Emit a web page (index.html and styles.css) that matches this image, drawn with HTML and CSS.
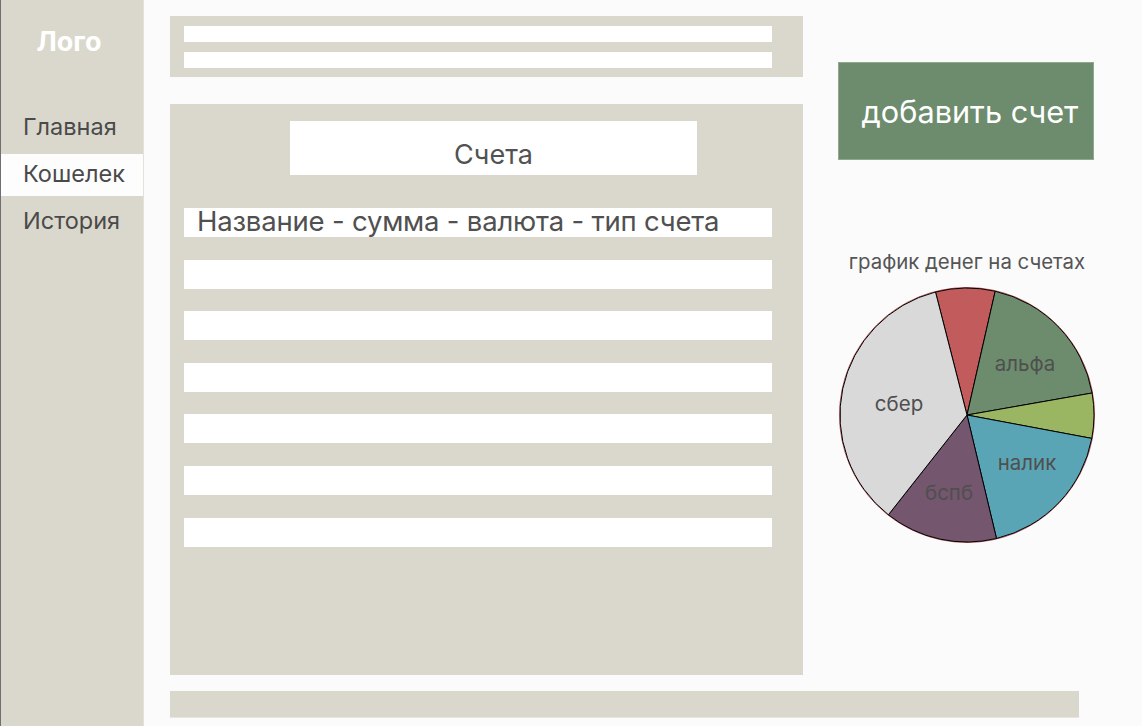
FILE: index.html
```html
<!DOCTYPE html>
<html lang="ru">
<head>
<meta charset="utf-8">
<title>Кошелек</title>
<link rel="stylesheet" href="styles.css">
</head>
<body>
<div class="app">
  <aside class="sidebar">
    <div class="logo">Лого</div>
    <nav class="nav">
      <div class="nav-item">Главная</div>
      <div class="nav-item active">Кошелек</div>
      <div class="nav-item">История</div>
    </nav>
  </aside>
  <main class="content">
    <div class="grid">
      <div class="left">
        <div class="topbar">
          <div class="bar"></div>
          <div class="bar"></div>
        </div>
        <section class="panel">
          <div class="panel-title">Счета</div>
          <div class="rows">
            <div class="row head">Название - сумма - валюта - тип счета</div>
            <div class="row"></div>
            <div class="row"></div>
            <div class="row"></div>
            <div class="row"></div>
            <div class="row"></div>
            <div class="row"></div>
          </div>
        </section>
      </div>
      <div class="right">
        <button class="add-btn">добавить счет</button>
        <div class="chart-title">график денег на счетах</div>
        <div class="pie">
          <svg width="262" height="262" viewBox="-131 -131 262 262">
            <circle cx="0" cy="0" r="127.5" fill="none" stroke="#c25b5b" stroke-width="1"/>
            <g stroke="#000" stroke-width="1" stroke-linejoin="round">
              <path d="M0 0 L-31.5 -123.0 A127 127 0 0 1 28.2 -123.8 Z" fill="#c25b5b"/>
              <path d="M0 0 L28.2 -123.8 A127 127 0 0 1 125.1 -22.0 Z" fill="#6d8c6d"/>
              <path d="M0 0 L125.1 -22.0 A127 127 0 0 1 124.8 23.4 Z" fill="#9bb663"/>
              <path d="M0 0 L124.8 23.4 A127 127 0 0 1 29.5 123.5 Z" fill="#5aa5b5"/>
              <path d="M0 0 L29.5 123.5 A127 127 0 0 1 -78.6 99.8 Z" fill="#74566e"/>
              <path d="M0 0 L-78.6 99.8 A127 127 0 0 1 -31.5 -123.0 Z" fill="#d9d9d9"/>
            </g>
            <g class="pie-label">
              <text x="58" y="-50" text-anchor="middle" dominant-baseline="middle">альфа</text>
              <text x="-68" y="-10" text-anchor="middle" dominant-baseline="middle">сбер</text>
              <text x="60" y="49" text-anchor="middle" dominant-baseline="middle">налик</text>
              <text x="-18" y="79" text-anchor="middle" dominant-baseline="middle">бспб</text>
            </g>
          </svg>
        </div>
      </div>
    </div>
    <div class="bottombar"></div>
  </main>
</div>
</body>
</html>
```

FILE: styles.css
```css
* { box-sizing: border-box; }
html, body { margin: 0; padding: 0; }
body {
  background: #fbfbfb;
  font-family: Inter, "Noto Sans", sans-serif;
  color: #4d4d4d;
  width: 1142px;
  height: 726px;
  overflow: hidden;
}
.app {
  display: flex;
  height: 726px;
}
.sidebar {
  width: 144px;
  flex: none;
  background: #dad8cc;
  border-left: 1px solid #6f6f6f;
  border-right: 1px solid #e4e2d8;
  display: flex;
  flex-direction: column;
}
.logo {
  color: #fff;
  font-weight: 700;
  font-size: 27px;
  line-height: 32px;
  text-align: center;
  height: 107px;
  padding-top: 26px;
  padding-right: 6px;
}
.nav {
  display: flex;
  flex-direction: column;
  gap: 5px;
}
.nav-item {
  height: 42px;
  display: flex;
  align-items: center;
  padding-left: 22px;
  padding-bottom: 3px;
  font-size: 23.5px;
  color: #4a4a4a;
}
.nav-item.active { background: #fdfdfd; }
.content {
  padding-left: 26px;
  padding-top: 16px;
  display: flex;
  flex-direction: column;
}
.grid {
  display: flex;
  gap: 35px;
}
.left {
  width: 633px;
  display: flex;
  flex-direction: column;
  gap: 27px;
}
.topbar {
  height: 61px;
  background: #dad8cc;
  padding: 10px 31px 0 14px;
  display: flex;
  flex-direction: column;
  gap: 10px;
}
.bar {
  height: 16px;
  background: #fff;
}
.panel {
  height: 571px;
  background: #dad8cc;
  padding: 17px 31px 0 14px;
}
.panel-title {
  width: 407px;
  height: 54px;
  margin-left: 106px;
  background: #fff;
  display: flex;
  align-items: center;
  justify-content: center;
  font-size: 27px;
  color: #525252;
  padding-top: 12px;
}
.rows {
  margin-top: 33px;
  display: flex;
  flex-direction: column;
  gap: 22.6px;
}
.row {
  height: 29px;
  background: #fff;
}
.row.head {
  font-size: 27.5px;
  line-height: 26px;
  padding-left: 13px;
  color: #505050;
  letter-spacing: -0.2px;
  white-space: nowrap;
}
.right {
  width: 256px;
  padding-top: 46px;
  display: flex;
  flex-direction: column;
}
.add-btn {
  width: 256px;
  height: 98px;
  border: 1px solid #8fa88f;
  background: #6d8c6d;
  color: #fff;
  font-family: inherit;
  font-size: 30.7px;
  padding: 0 0 0 8px;
  text-align: center;
}
.chart-title {
  margin-top: 88px;
  font-size: 20.4px;
  line-height: 28px;
  color: #555;
  text-align: center;
  width: 258px;
}
.pie {
  margin-top: 8px;
  margin-left: -2px;
  width: 262px;
  height: 262px;
}
.pie svg { display: block; }
.pie-label {
  font-family: Inter, "Noto Sans", sans-serif;
  font-size: 20.5px;
  fill: #4f4f4f;
}
.bottombar {
  margin-top: 16px;
  width: 909px;
  height: 27px;
  background: #dad8cc;
  border-bottom: 1px solid #e8e6de;
}
```
